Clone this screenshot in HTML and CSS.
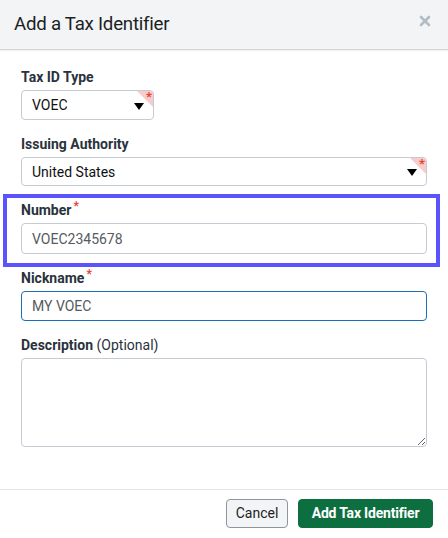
FILE: index.html
```html
<!DOCTYPE html>
<html lang="en">
<head>
<meta charset="utf-8">
<title>Add a Tax Identifier</title>
<link rel="stylesheet" href="styles.css">
</head>
<body>
<div class="modal">
  <header class="modal-header">
    <h1 class="modal-title">Add a Tax Identifier</h1>
    <button class="close" type="button" aria-label="Close">
      <svg width="12" height="12" viewBox="0 0 12 12"><path d="M2 2 L10 10 M10 2 L2 10" stroke="#b3bcc6" stroke-width="2.6" stroke-linecap="round"/></svg>
    </button>
  </header>
  <div class="modal-body">
    <div class="field">
      <label class="label">Tax ID Type</label>
      <div class="select short">
        <span class="select-value">VOEC</span>
        <span class="arrow"></span>
        <span class="req-corner"><span class="req-star">*</span></span>
      </div>
    </div>
    <div class="field">
      <label class="label">Issuing Authority</label>
      <div class="select">
        <span class="select-value">United States</span>
        <span class="arrow"></span>
        <span class="req-corner"><span class="req-star">*</span></span>
      </div>
    </div>
    <div class="field highlighted">
      <label class="label">Number<span class="star">*</span></label>
      <div class="input">VOEC2345678</div>
    </div>
    <div class="field">
      <label class="label">Nickname<span class="star">*</span></label>
      <div class="input focused">MY VOEC</div>
    </div>
    <div class="field">
      <label class="label">Description <span class="optional">(Optional)</span></label>
      <textarea class="textarea"></textarea>
    </div>
  </div>
  <footer class="modal-footer">
    <button class="btn btn-cancel" type="button">Cancel</button>
    <button class="btn btn-primary" type="button">Add Tax Identifier</button>
  </footer>
</div>
</body>
</html>
```
FILE: styles.css
```css
* { box-sizing: border-box; }
html, body { margin: 0; padding: 0; background: #fff; }
body {
  font-family: Roboto, "Liberation Sans", Arial, sans-serif;
  color: #1f2933;
  width: 448px;
  height: 538px;
  overflow: hidden;
}
.modal { display: flex; flex-direction: column; height: 538px; }
.modal-header {
  height: 50px;
  background: #f3f4f6;
  border-bottom: 1px solid #d3d6da;
  box-shadow: 0 1px 1px rgba(0,0,0,0.06);
  display: flex;
  align-items: center;
  justify-content: space-between;
  padding: 0 17px 2px 14px;
}
.modal-title {
  margin: 0;
  font-size: 18.7px;
  letter-spacing: -0.25px;
  font-weight: 400;
  color: #1b1f24;
}
.close {
  border: 0;
  background: none;
  padding: 0;
  display: flex;
  margin-top: -6px;
}
.modal-body {
  padding: 17px 21px 0 21px;
  display: flex;
  flex-direction: column;
  gap: 14px;
  flex: 1;
}
.field { display: flex; flex-direction: column; gap: 3px; position: relative; }
.label {
  font-size: 14px;
  line-height: 20px;
  height: 20px;
  font-weight: 700;
  color: #2a323c;
}
.label .star {
  color: #e8432e;
  font-weight: 700;
  font-size: 12px;
  line-height: 0;
  position: relative;
  top: -5px;
  margin-left: 2px;
}
.label .optional { font-weight: 400; color: #2a323c; }
.select, .input {
  position: relative;
  height: 30px;
  border: 1px solid #c4cbd2;
  border-radius: 4px;
  display: flex;
  align-items: center;
  padding: 0 10px;
  font-size: 14px;
  overflow: hidden;
}
.select { height: 29px; color: #111; }
.select.short { width: 133px; height: 30px; }
.select-value { flex: 1; }
.arrow {
  width: 0; height: 0;
  border-left: 5px solid transparent;
  border-right: 5px solid transparent;
  border-top: 7px solid #000;
  margin-right: -1px;
  margin-top: 2px;
}
.req-corner {
  position: absolute;
  top: 0; right: 0;
  width: 0; height: 0;
  border-top: 16px solid #f7cccc;
  border-left: 16px solid transparent;
}
.req-star {
  position: absolute;
  top: -18px;
  right: 1px;
  color: #e8432e;
  font-size: 13px;
  font-weight: 700;
  line-height: 16px;
}
.input { height: 31px; color: #555b61; }
.input.focused { border-color: #1a6fb5; height: 30px; }
.highlighted::after {
  content: "";
  position: absolute;
  top: -6px; left: -18px; right: -13px; bottom: -13px;
  border: 4.5px solid #5b53fb;
  pointer-events: none;
}
.textarea {
  height: 89px;
  border: 1px solid #c4cbd2;
  border-radius: 4px;
  font: inherit;
  resize: vertical;
}
.modal-footer {
  height: 49px;
  border-top: 1px solid #e3e5e8;
  display: flex;
  justify-content: flex-end;
  align-items: center;
  gap: 10px;
  padding: 0 15px 2px 0;
}
.btn {
  height: 29px;
  border-radius: 4px;
  font-family: inherit;
  font-size: 14px;
  padding: 0;
  white-space: nowrap;
  text-align: center;
}
.btn-cancel {
  background: #f3f4f6;
  border: 1px solid #8d96a0;
  color: #1b1f24;
  width: 62px;
}
.btn-primary {
  background: #0d6e3f;
  border: 1px solid #0d6e3f;
  color: #fff;
  font-weight: 700;
  font-size: 14px;
  letter-spacing: -0.2px;
  width: 135px;
}
```
